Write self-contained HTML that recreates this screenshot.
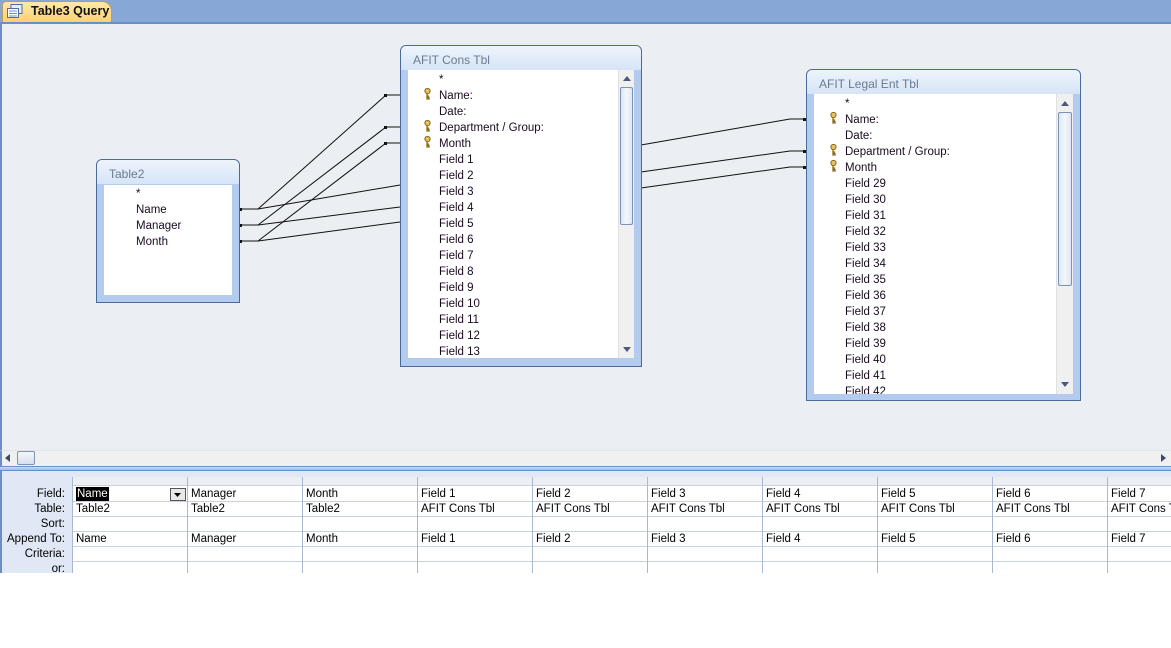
<!DOCTYPE html>
<html><head><meta charset="utf-8"><style>
*{margin:0;padding:0;box-sizing:border-box}
body{width:1171px;height:648px;background:#fff;position:relative;overflow:hidden;font-family:"Liberation Sans",sans-serif;font-size:11.5px;color:#000}
.a{position:absolute}
.tbl{position:absolute;border:1px solid #4a6a9a;border-radius:6px 6px 0 0;background:#b3cbee}
.tt{position:absolute;left:0;right:0;top:0;height:24px;background:linear-gradient(#eef4fc,#d6e4f7);border-radius:5px 5px 0 0;color:#6a7a90;font-size:12px;padding:7px 0 0 12px}
.wb{position:absolute;background:#fff;overflow:hidden}
.it{position:absolute;height:16px;line-height:18px;white-space:nowrap;color:#1a0a20}
.sb{position:absolute;background:#f0f0f0;border-left:1px solid #e0e0e0}
.th{position:absolute;left:1px;right:1px;background:linear-gradient(90deg,#dde6f2,#f4f7fb,#dde6f2);border:1px solid #7d93b3;border-radius:2px}
.grid{position:absolute;left:72px;top:477px;width:1100px;height:96px;background:#fff}
.gl{position:absolute;left:0;right:0;height:1px;background:#c5d2e4}
.gv{position:absolute;top:0;bottom:0;width:1px;background:#a9b9d1}
.lab{position:absolute;right:1106px;text-align:right;font-size:11.5px;line-height:17px}
.c{position:absolute;font-size:11.5px;line-height:17px;white-space:nowrap}
</style></head><body>
<div class="a" style="left:0;top:0;width:1171px;height:22px;background:#87a7d6"></div>
<div class="a" style="left:0;top:22px;width:1171px;height:2px;background:#6a8fc8"></div>
<div class="a" style="left:2px;top:1px;width:110px;height:21px;background:linear-gradient(#ffe9a8,#ffd071);border:1px solid #b89c60;border-bottom:none;border-radius:4px 10px 0 0"></div>
<svg class="a" style="left:7px;top:4px" width="16" height="14"><rect x="4" y="0.5" width="11" height="9" fill="#e8eef8" stroke="#4d6f9d"/><rect x="0.5" y="4.5" width="11" height="9" fill="#fff" stroke="#4d6f9d"/><line x1="2" y1="7" x2="10" y2="7" stroke="#6b8db8"/><line x1="2" y1="9.5" x2="10" y2="9.5" stroke="#6b8db8"/><line x1="2" y1="12" x2="10" y2="12" stroke="#6b8db8"/></svg>
<div class="a" style="left:31px;top:4px;font-size:12.5px;font-weight:bold;color:#111">Table3 Query</div>
<div class="a" style="left:0;top:24px;width:1171px;height:426px;background:#ebeef2;border-left:2px solid #6a8fc8"></div>
<svg class="a" style="left:0;top:0" width="1171" height="450">
<g stroke="#111" stroke-width="1" fill="none">
<path d="M240 209 H258 L386 95 H400"/><path d="M240 225 H258 L386 127 H400"/><path d="M240 241 H258 L386 143 H400"/>
<path d="M258 209 L400 185"/><path d="M258 225 L400 207"/><path d="M258 241 L400 222"/>
<path d="M641 145 L790 119 H806"/><path d="M641 172 L790 151 H806"/><path d="M641 188 L790 167 H806"/>
</g>
<g fill="#111"><rect x="239" y="208" width="3" height="3"/><rect x="239" y="224" width="3" height="3"/><rect x="239" y="240" width="3" height="3"/>
<rect x="384" y="94" width="3" height="3"/><rect x="384" y="126" width="3" height="3"/><rect x="384" y="142" width="3" height="3"/>
<rect x="803" y="118" width="3" height="3"/><rect x="803" y="150" width="3" height="3"/><rect x="803" y="166" width="3" height="3"/></g>
</svg>
<div class="tbl" style="left:96px;top:159px;width:144px;height:144px"><div class="tt">Table2</div>
<div class="wb" style="left:7px;top:25px;width:128px;height:110px">
<div class="it" style="left:32px;top:0">*</div><div class="it" style="left:32px;top:16px">Name</div><div class="it" style="left:32px;top:32px">Manager</div><div class="it" style="left:32px;top:48px">Month</div></div></div>
<div class="tbl" style="left:400px;top:45px;width:242px;height:322px"><div class="tt">AFIT Cons Tbl</div>
<div class="wb" style="left:7px;top:24px;width:226px;height:288px">
<div class="it" style="left:31px;top:1px">*</div>
<div class="it" style="left:31px;top:17px">Name:</div>
<div class="it" style="left:31px;top:33px">Date:</div>
<div class="it" style="left:31px;top:49px">Department / Group:</div>
<div class="it" style="left:31px;top:65px">Month</div>
<div class="it" style="left:31px;top:81px">Field 1</div><div class="it" style="left:31px;top:97px">Field 2</div><div class="it" style="left:31px;top:113px">Field 3</div><div class="it" style="left:31px;top:129px">Field 4</div><div class="it" style="left:31px;top:145px">Field 5</div><div class="it" style="left:31px;top:161px">Field 6</div><div class="it" style="left:31px;top:177px">Field 7</div><div class="it" style="left:31px;top:193px">Field 8</div><div class="it" style="left:31px;top:209px">Field 9</div><div class="it" style="left:31px;top:225px">Field 10</div><div class="it" style="left:31px;top:241px">Field 11</div><div class="it" style="left:31px;top:257px">Field 12</div><div class="it" style="left:31px;top:273px">Field 13</div>
<div class="sb" style="left:210px;top:0;width:16px;height:288px"><svg class="a" style="left:4px;top:6px" width="8" height="5"><path d="M0 5 L4 0 L8 5Z" fill="#4a5a78"/></svg><div class="th" style="top:17px;height:138px"></div><svg class="a" style="left:4px;top:277px" width="8" height="5"><path d="M0 0 L4 5 L8 0Z" fill="#4a5a78"/></svg></div>
</div></div>
<div class="tbl" style="left:806px;top:69px;width:275px;height:332px"><div class="tt">AFIT Legal Ent Tbl</div>
<div class="wb" style="left:7px;top:24px;width:259px;height:300px">
<div class="it" style="left:31px;top:1px">*</div>
<div class="it" style="left:31px;top:17px">Name:</div>
<div class="it" style="left:31px;top:33px">Date:</div>
<div class="it" style="left:31px;top:49px">Department / Group:</div>
<div class="it" style="left:31px;top:65px">Month</div>
<div class="it" style="left:31px;top:81px">Field 29</div><div class="it" style="left:31px;top:97px">Field 30</div><div class="it" style="left:31px;top:113px">Field 31</div><div class="it" style="left:31px;top:129px">Field 32</div><div class="it" style="left:31px;top:145px">Field 33</div><div class="it" style="left:31px;top:161px">Field 34</div><div class="it" style="left:31px;top:177px">Field 35</div><div class="it" style="left:31px;top:193px">Field 36</div><div class="it" style="left:31px;top:209px">Field 37</div><div class="it" style="left:31px;top:225px">Field 38</div><div class="it" style="left:31px;top:241px">Field 39</div><div class="it" style="left:31px;top:257px">Field 40</div><div class="it" style="left:31px;top:273px">Field 41</div><div class="it" style="left:31px;top:289px">Field 42</div>
<div class="sb" style="left:242px;top:0;width:17px;height:300px"><svg class="a" style="left:4px;top:7px" width="8" height="5"><path d="M0 5 L4 0 L8 5Z" fill="#4a5a78"/></svg><div class="th" style="top:18px;height:174px"></div><svg class="a" style="left:4px;top:288px" width="8" height="5"><path d="M0 0 L4 5 L8 0Z" fill="#4a5a78"/></svg></div>
</div></div>
<svg width="0" height="0" style="position:absolute"><defs><g id="k"><circle cx="3.5" cy="3" r="2.6" fill="#e8c45a" stroke="#8a6a1a"/><path d="M3 5.5 V11 H5 V9.5 H4 V8 H5" fill="none" stroke="#8a6a1a" stroke-width="1.3"/></g></defs></svg>
<svg class="a" style="left:424px;top:88px" width="8" height="12"><use href="#k"/></svg>
<svg class="a" style="left:424px;top:120px" width="8" height="12"><use href="#k"/></svg>
<svg class="a" style="left:424px;top:136px" width="8" height="12"><use href="#k"/></svg>
<svg class="a" style="left:830px;top:112px" width="8" height="12"><use href="#k"/></svg>
<svg class="a" style="left:830px;top:144px" width="8" height="12"><use href="#k"/></svg>
<svg class="a" style="left:830px;top:160px" width="8" height="12"><use href="#k"/></svg>
<div class="a" style="left:0;top:450px;width:1171px;height:16px;background:#f0f0f0;border-top:1px solid #e0e4ea;border-left:2px solid #6a8fc8"></div>
<svg class="a" style="left:5px;top:454px" width="5" height="8"><path d="M5 0 L0 4 L5 8Z" fill="#3a4a68"/></svg>
<div class="a" style="left:17px;top:451px;width:18px;height:14px;background:linear-gradient(#f4f6fa,#d8e0ec);border:1px solid #7d93b3;border-radius:2px"></div>
<svg class="a" style="left:1161px;top:454px" width="5" height="8"><path d="M0 0 L5 4 L0 8Z" fill="#3a4a68"/></svg>
<div class="a" style="left:0;top:466px;width:1171px;height:5px;background:linear-gradient(#c9dcf5,#9dbbe8);border-top:1px solid #6a8fc8;border-bottom:1px solid #6a8fc8"></div>
<div class="a" style="left:0;top:471px;width:1171px;height:102px;background:#dfe8f4;border-left:2px solid #6a8fc8"></div>
<div class="grid">
<div class="a" style="left:0;top:0;right:0;height:9px;background:#eceef1;border-bottom:1px solid #c5d2e4"></div>
<div class="gl" style="top:24px"></div><div class="gl" style="top:39px"></div><div class="gl" style="top:54px"></div><div class="gl" style="top:69px"></div><div class="gl" style="top:84px"></div>
<div class="gv" style="left:0"></div><div class="gv" style="left:115px"></div><div class="gv" style="left:230px"></div><div class="gv" style="left:345px"></div><div class="gv" style="left:460px"></div><div class="gv" style="left:575px"></div><div class="gv" style="left:690px"></div><div class="gv" style="left:805px"></div><div class="gv" style="left:920px"></div><div class="gv" style="left:1035px"></div>
<div class="c" style="left:4px;top:10px;background:#000;color:#fff;padding:0 1px;line-height:14px">Name</div>
<div class="a" style="left:98px;top:11px;width:16px;height:13px;border:1px solid #555;background:#e8e8e8"></div><svg class="a" style="left:102px;top:16px" width="7" height="4"><path d="M0 0 L3.5 4 L7 0Z" fill="#000"/></svg>
</div>
<div class="lab" style="top:486px">Field:</div><div class="lab" style="top:501px">Table:</div><div class="lab" style="top:516px">Sort:</div><div class="lab" style="top:531px">Append To:</div><div class="lab" style="top:546px">Criteria:</div><div class="lab" style="top:561px">or:</div>
<div class="c" style="left:191px;top:486px">Manager</div><div class="c" style="left:306px;top:486px">Month</div><div class="c" style="left:421px;top:486px">Field 1</div><div class="c" style="left:536px;top:486px">Field 2</div><div class="c" style="left:651px;top:486px">Field 3</div><div class="c" style="left:766px;top:486px">Field 4</div><div class="c" style="left:881px;top:486px">Field 5</div><div class="c" style="left:996px;top:486px">Field 6</div><div class="c" style="left:1111px;top:486px">Field 7</div>
<div class="c" style="left:76px;top:501px">Table2</div><div class="c" style="left:191px;top:501px">Table2</div><div class="c" style="left:306px;top:501px">Table2</div><div class="c" style="left:421px;top:501px">AFIT Cons Tbl</div><div class="c" style="left:536px;top:501px">AFIT Cons Tbl</div><div class="c" style="left:651px;top:501px">AFIT Cons Tbl</div><div class="c" style="left:766px;top:501px">AFIT Cons Tbl</div><div class="c" style="left:881px;top:501px">AFIT Cons Tbl</div><div class="c" style="left:996px;top:501px">AFIT Cons Tbl</div><div class="c" style="left:1111px;top:501px">AFIT Cons Tbl</div>
<div class="c" style="left:76px;top:531px">Name</div><div class="c" style="left:191px;top:531px">Manager</div><div class="c" style="left:306px;top:531px">Month</div><div class="c" style="left:421px;top:531px">Field 1</div><div class="c" style="left:536px;top:531px">Field 2</div><div class="c" style="left:651px;top:531px">Field 3</div><div class="c" style="left:766px;top:531px">Field 4</div><div class="c" style="left:881px;top:531px">Field 5</div><div class="c" style="left:996px;top:531px">Field 6</div><div class="c" style="left:1111px;top:531px">Field 7</div>
</body></html>
